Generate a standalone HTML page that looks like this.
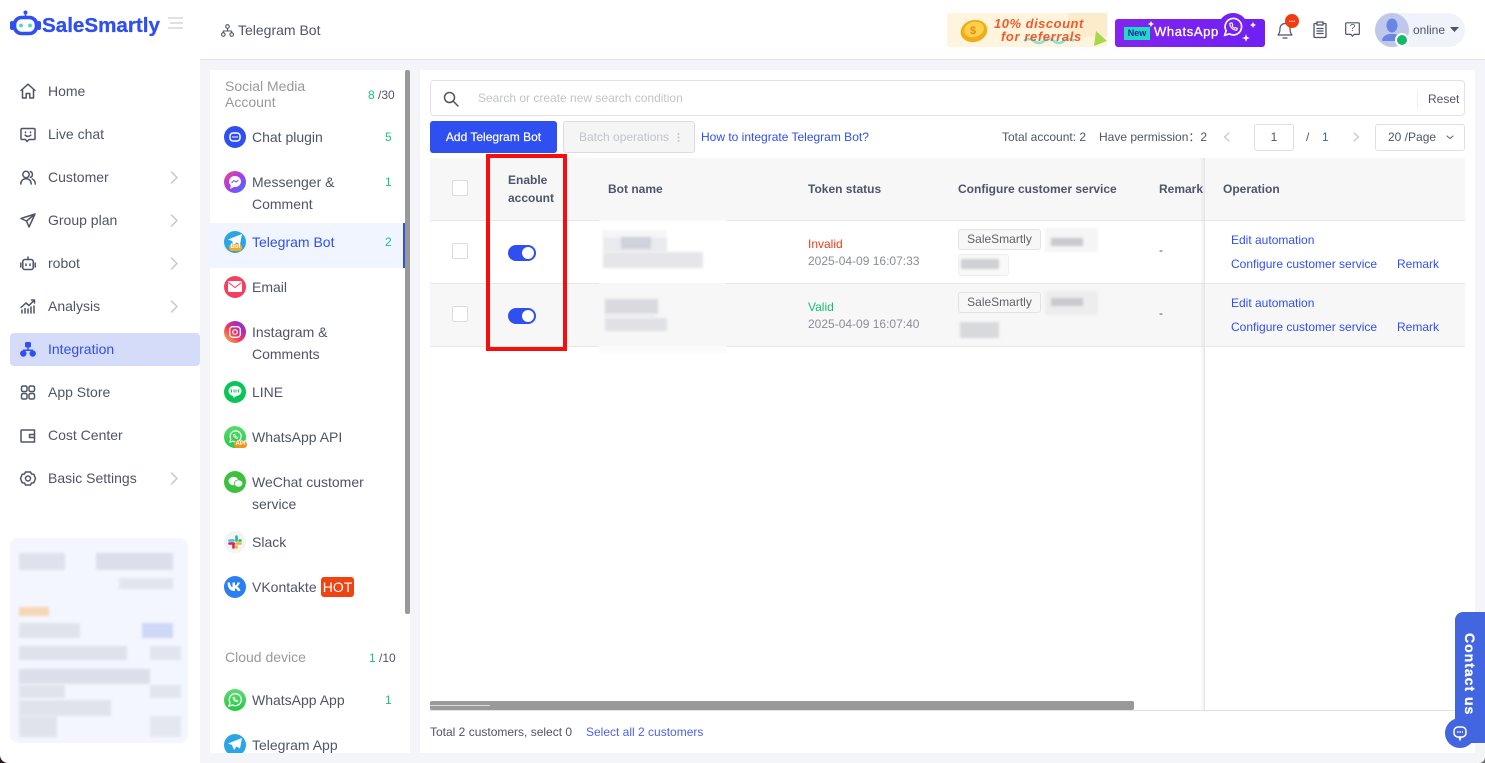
<!DOCTYPE html>
<html><head><meta charset="utf-8"><title>Telegram Bot</title>
<style>
*{box-sizing:border-box;margin:0;padding:0}
html,body{width:1485px;height:763px;overflow:hidden;background:#f4f5f8;font-family:"Liberation Sans",Arial,sans-serif}
body{position:relative}
.a{position:absolute}
.z{filter:blur(1.2px)}
.t{position:absolute;white-space:nowrap;line-height:20px;height:20px}
.m{font-size:14px;color:#4e5569;left:48px}
.l{font-size:14px;color:#4e5569;left:252px}
.s{font-size:12px;color:#4e5569}
.b{font-size:12px;color:#4e5569;font-weight:bold}
.k{font-size:12px;color:#2f4ff0}
.n{font-size:12px;color:#19c37d;left:385px}
.g{font-size:12px;color:#8a8d99}
svg{position:absolute;display:block;overflow:visible}
.ico{fill:none;stroke:#4e5569;stroke-width:1.5;stroke-linecap:round;stroke-linejoin:round}
.c{position:absolute;left:224px;width:22px;height:22px;border-radius:50%}
.cb{position:absolute;left:452px;width:16px;height:16px;border:1px solid #dcdcdc;border-radius:2px;background:#fff}
.sw{position:absolute;left:508px;width:28px;height:16px;border-radius:8px;background:#2f4ff0}
.sw i{position:absolute;right:2px;top:2px;width:12px;height:12px;border-radius:50%;background:#fff}
.tag{position:absolute;left:958px;width:83px;height:21px;border:1px solid #e3e3e3;background:#f7f7f7;border-radius:3px;font-size:12px;line-height:19px;color:#606266;text-align:center}
.bdg{position:absolute;background:#f7a823;border-radius:3px;color:#fff;font-size:6px;line-height:7px;height:7px;text-align:center;font-weight:bold}
</style></head><body>

<!-- sidebar -->
<div class="a" style="left:0;top:0;width:200px;height:763px;background:#fff"></div>
<svg style="left:10px;top:10px" width="31" height="27" viewBox="0 0 31 27">
<circle cx="15.5" cy="2.5" r="2" fill="#2f4ff0"/><path d="M15.5 3v4" stroke="#2f4ff0" stroke-width="1.5"/>
<rect x="4.5" y="7.500" width="22" height="16" rx="7" fill="none" stroke="#2f4ff0" stroke-width="3.600"/>
<rect x="0" y="11" width="4" height="9" rx="2" fill="#2f4ff0"/><rect x="27" y="11" width="4" height="9" rx="2" fill="#2f4ff0"/>
<circle cx="11" cy="15.500" r="1.900" fill="#4fd6c4"/><circle cx="20" cy="15.500" r="1.900" fill="#4fd6c4"/></svg>
<div class="t" style="left:42px;top:14px;height:24px;line-height:24px;font-size:20.6px;font-weight:bold;color:#2f4ff0;-webkit-text-stroke:.3px #2f4ff0">SaleSmartly</div>
<svg style="left:167px;top:17px" width="17" height="12"><path d="M1 1h15M3 6h13M1 11h15" stroke="#d4d6dc" stroke-width="1.5"/></svg>

<svg class="ico" style="left:20px;top:83px" width="16" height="16" viewBox="0 0 16 16"><path d="M1 7.500 8 1.200l7 6.300M2.500 6.500V15h3.700v-4.500h3.600V15h3.700V6.500"/></svg>
<svg class="ico" style="left:20px;top:127px" width="16" height="16" viewBox="0 0 16 16"><path d="M2 1.500h12a1 1 0 0 1 1 1v9a1 1 0 0 1-1 1H9l-2 2-1.500-2H2a1 1 0 0 1-1-1v-9a1 1 0 0 1 1-1zM5.200 8.200c1.500 1.500 4 1.500 5.600 0M5.500 5v.6M10.500 5v.6"/></svg>
<svg class="ico" style="left:20px;top:170px" width="16" height="15" viewBox="0 0 16 15"><circle cx="6" cy="4.500" r="3.200"/><path d="M.8 14c0-3.200 2.200-5.300 5.200-5.300s5.200 2.100 5.200 5.300M10.300 1.500a3.200 3.200 0 0 1 0 6M12.300 9c1.700.8 3 2.600 3 5"/></svg>
<svg class="ico" style="left:20px;top:213px" width="16" height="15" viewBox="0 0 16 15"><path d="M15 1 1 5.500l5.500 2.500 2.500 6zM6.500 8 15 1"/></svg>
<svg class="ico" style="left:20px;top:256px" width="16" height="15" viewBox="0 0 16 15"><rect x="2.800" y="3.500" width="10.400" height="10" rx="2"/><path d="M8 3.500V1M.8 7v4M15.200 7v4M6 8v1.500M10 8v1.500"/></svg>
<svg class="ico" style="left:20px;top:299px" width="16" height="15" viewBox="0 0 16 15"><path d="M1 8.500 6 4l3 2.500L14.500 1M11.500 1h3v3M2 11v3M5 9.500V14M8 10v4M11 8v6M14 7v7"/></svg>
<svg class="ico" style="left:20px;top:385px" width="16" height="15" viewBox="0 0 16 15"><rect x="1.500" y="1" width="5.500" height="5.500" rx="1.500"/><rect x="9" y="1" width="5.500" height="5.500" rx="1.500"/><rect x="1.500" y="8.500" width="5.500" height="5.500" rx="1.500"/><rect x="9" y="8.500" width="5.500" height="5.500" rx="1.500"/></svg>
<svg class="ico" style="left:20px;top:428px" width="16" height="15" viewBox="0 0 16 15"><path d="M14.500 2H2a1 1 0 0 0-1 1v10a1 1 0 0 0 1 1h12.500zM9.500 6.500h5M9.500 9.500h5M9.500 6.500v3"/></svg>
<svg class="ico" style="left:20px;top:471px" width="16" height="15" viewBox="0 0 16 15"><path d="M5.500 1h5L11.500 3l2.300.2 1.700 4.300-1.700 4.300-2.300.2L10.500 14h-5l-1-2-2.300-.2L.5 7.500l1.700-4.300L4.500 3z"/><circle cx="8" cy="7.500" r="2.500"/></svg>

<svg class="ico" style="left:170px;top:171px;stroke:#c6c8d0" width="9" height="13"><path d="M1.500 1 7 6.500 1.500 12"/></svg>
<svg class="ico" style="left:170px;top:214px;stroke:#c6c8d0" width="9" height="13"><path d="M1.500 1 7 6.500 1.500 12"/></svg>
<svg class="ico" style="left:170px;top:257px;stroke:#c6c8d0" width="9" height="13"><path d="M1.500 1 7 6.500 1.500 12"/></svg>
<svg class="ico" style="left:170px;top:300px;stroke:#c6c8d0" width="9" height="13"><path d="M1.500 1 7 6.500 1.500 12"/></svg>
<svg class="ico" style="left:170px;top:472px;stroke:#c6c8d0" width="9" height="13"><path d="M1.500 1 7 6.500 1.500 12"/></svg>

<div class="a" style="left:10px;top:333px;width:190px;height:33px;background:#d5dcf9;border-radius:4px"></div>
<div class="t m" style="top:81px">Home</div>
<div class="t m" style="top:124px">Live chat</div>
<div class="t m" style="top:167px">Customer</div>
<div class="t m" style="top:210px">Group plan</div>
<div class="t m" style="top:253px">robot</div>
<div class="t m" style="top:296px">Analysis</div>
<div class="t m" style="top:339px;color:#2f4ff0">Integration</div>
<div class="t m" style="top:382px">App Store</div>
<div class="t m" style="top:425px">Cost Center</div>
<div class="t m" style="top:468px">Basic Settings</div>
<svg style="left:20px;top:342px" width="16" height="15" viewBox="0 0 16 15" fill="#2f4ff0"><rect x="5" y="0" width="6" height="5.500" rx="1.500"/><circle cx="3.300" cy="11.500" r="3.200"/><circle cx="12.700" cy="11.500" r="3.200"/><path d="M7.300 5h1.400v2.500H13v2h-1.500V9H4.500v.5H3v-2h4.300z"/></svg>

<!-- blurred card -->
<div class="a" style="left:10px;top:538px;width:178px;height:205px;background:#f3f6fe;border-radius:8px"></div>
<div class="a z" style="left:19px;top:553px;width:46px;height:17px;background:#dfe2ec"></div>
<div class="a z" style="left:96px;top:553px;width:77px;height:17px;background:#dcdfea"></div>
<div class="a z" style="left:119px;top:578px;width:54px;height:11px;background:#e2e5ee"></div>
<div class="a z" style="left:19px;top:607px;width:30px;height:9px;background:#f6d7b5"></div>
<div class="a z" style="left:19px;top:623px;width:61px;height:15px;background:#e0e3ec"></div>
<div class="a z" style="left:142px;top:623px;width:31px;height:15px;background:#cfd8f8"></div>
<div class="a z" style="left:19px;top:646px;width:108px;height:14px;background:#dfe2eb"></div>
<div class="a z" style="left:150px;top:646px;width:31px;height:14px;background:#e2e5ee"></div>
<div class="a z" style="left:19px;top:669px;width:131px;height:15px;background:#dcdfe9"></div>
<div class="a z" style="left:19px;top:685px;width:46px;height:13px;background:#e0e3ec"></div>
<div class="a z" style="left:150px;top:685px;width:31px;height:13px;background:#e2e5ee"></div>
<div class="a z" style="left:19px;top:700px;width:92px;height:16px;background:#e0e3ec"></div>
<div class="a z" style="left:19px;top:716px;width:38px;height:21px;background:#e0e3ec"></div>
<div class="a z" style="left:150px;top:716px;width:31px;height:21px;background:#e4e7f0"></div>

<!-- header -->
<div class="a" style="left:200px;top:0;width:1285px;height:60px;background:#fff;border-bottom:1px solid #e2e2e2"></div>
<svg class="ico" style="left:221px;top:24px;stroke-width:1.100" width="13" height="13" viewBox="0 0 13 13"><circle cx="6.500" cy="2.500" r="1.800"/><circle cx="2.300" cy="10.500" r="1.800"/><circle cx="10.700" cy="10.500" r="1.800"/><path d="M6.500 4.500v2.500M2.300 8.700V7h8.400v1.700"/></svg>
<div class="t" style="left:238px;top:20px;font-size:14px;color:#4e5569">Telegram Bot</div>

<!-- referral banner -->
<div class="a" style="left:947px;top:13px;width:160px;height:34px;background:#fff4dd;border-radius:3px"></div>
<div class="a" style="left:1068px;top:13px;width:39px;height:24px;background:#fdeccb"></div>
<svg style="left:958px;top:18px" width="30" height="24"><ellipse cx="16" cy="13" rx="13.500" ry="11" fill="#f0ac1a" transform="rotate(-15 16 13)"/><ellipse cx="16" cy="11.500" rx="10" ry="7.500" fill="#fcd24a" transform="rotate(-15 16 11.500)"/><text x="12" y="16" font-size="11" font-weight="bold" fill="#e8871e" font-family="Liberation Sans">$</text></svg>
<svg style="left:1094px;top:31px" width="14" height="16"><path d="M2 0 13 10 0 15z" fill="#a5d94a"/></svg>
<svg style="left:1024px;top:38px" width="50" height="6"><path d="M0 3q5-4 10 0t10 0 10 0 10 0 10 0" fill="none" stroke="#7fe3de" stroke-width="2.500"/></svg>
<div class="t" style="left:994px;top:15px;font-size:13px;line-height:17px;height:17px;font-weight:bold;font-style:italic;color:#ef5b2b;letter-spacing:.5px">10% discount</div>
<div class="t" style="left:1001px;top:28px;font-size:13px;line-height:17px;height:17px;font-weight:bold;font-style:italic;color:#ef5b2b;letter-spacing:.6px">for referrals</div>

<!-- whatsapp banner -->
<div class="a" style="left:1115px;top:19px;width:150px;height:28px;background:linear-gradient(90deg,#8324ee,#6f20f5);border-radius:3px"></div>
<div class="a" style="left:1218px;top:13px;width:30px;height:20px;background:#7322f3;border-radius:15px 15px 0 0"></div>
<div class="a" style="left:1124px;top:27px;width:26px;height:13px;background:#1edcc4;font-size:9px;line-height:13px;font-weight:bold;color:#2a1aa0;text-align:center">New</div>
<div class="t" style="left:1154px;top:22px;font-size:13px;color:#fff;letter-spacing:.6px;-webkit-text-stroke:.3px #fff">WhatsApp</div>
<svg style="left:1222px;top:16px" width="22" height="22" viewBox="0 0 24 24" fill="none" stroke="#fff" stroke-width="1.800"><path d="M3 21l1.500-5A9 9 0 1 1 8 19.500z"/><path d="M8.500 8c0 4 3.500 7.500 7.500 7.500l.8-2-2.300-1-1 .8c-1-.5-2-1.500-2.500-2.500l.8-1-1-2.300z" stroke-width="1.200"/></svg>
<svg style="left:1115px;top:13px" width="150" height="34" fill="#fff"><path d="M138 9l1 2 2 1-2 1-1 2-1-2-2-1 2-1zM131 21l1 3 3 1-3 1-1 3-1-3-3-1 3-1zM36 8l1 2 2 1-2 1-1 2-1-2-2-1 2-1z"/></svg>

<!-- top icons -->
<svg class="ico" style="left:1277px;top:21px;stroke-width:1.200" width="16" height="18" viewBox="0 0 16 18"><path d="M1 14c1.500-1.500 2-3 2-6.500a5 5 0 0 1 10 0c0 3.500.5 5 2 6.500zM6 17h4"/></svg>
<div class="a" style="left:1285px;top:14px;width:14px;height:14px;border-radius:50%;background:#f23c10;color:#fff;font-size:8px;line-height:12px;text-align:center;font-weight:bold">...</div>
<svg class="ico" style="left:1313px;top:21px;stroke-width:1.300" width="14" height="17" viewBox="0 0 14 17"><rect x="1" y="2.500" width="12" height="14" rx="1"/><rect x="4" y="1" width="6" height="3" fill="#fff"/><path d="M4 7.500h6M4 10h6M4 12.500h6"/></svg>
<svg class="ico" style="left:1345px;top:22px;stroke-width:1.200" width="15" height="15" viewBox="0 0 15 15"><path d="M1.500.8h12a.8.800 0 0 1 .8.800v10a.8.800 0 0 1-.8.800H9l-1.500 1.800L6 12.400H1.500a.8.800 0 0 1-.8-.800v-10a.8.800 0 0 1 .8-.800z"/></svg>
<div class="t" style="left:1345px;top:19px;width:15px;text-align:center;font-size:10px;color:#4e5569">?</div>

<div class="a" style="left:1375px;top:13px;width:90px;height:34px;background:#f0f3fa;border-radius:17px"></div>
<div class="a" style="left:1375px;top:13px;width:34px;height:34px;background:#bfc8ea;border-radius:50%"></div>
<svg style="left:1381px;top:18px" width="22" height="24" viewBox="0 0 22 24" fill="#6a85e8"><ellipse cx="11" cy="7.500" rx="5.500" ry="7"/><path d="M1 23c0-4 3-6 7-7h6c4 1 7 3 7 7z"/></svg>
<div class="a" style="left:1395px;top:33px;width:14px;height:14px;border-radius:50%;background:#16b96a;border:2px solid #fff"></div>
<div class="t" style="left:1413px;top:20px;font-size:12px;color:#4e5569">online</div>
<svg style="left:1450px;top:27px" width="9" height="6"><path d="M0 0h9L4.500 5z" fill="#4e5569"/></svg>

<!-- list panel -->
<div class="a" style="left:210px;top:70px;width:200px;height:683px;background:#fff"></div>
<div class="a" style="left:405px;top:70px;width:5px;height:544px;background:#999;border-radius:2px"></div>
<div class="a" style="left:210px;top:223px;width:195px;height:45px;background:#f0f5ff"></div>
<div class="a" style="left:403px;top:223px;width:2px;height:45px;background:#2f4ff0"></div>

<div class="a" style="left:225px;top:78px;font-size:14px;line-height:16px;color:#999">Social Media<br>Account</div>
<div class="t" style="left:368px;top:85px;font-size:12px;color:#4e5569"><span style="color:#19c37d">8</span> /30</div>

<div class="c" style="top:126px;background:#2f4ff0"></div>
<svg style="left:229px;top:132px" width="12" height="11"><rect x="1" y="1" width="10" height="8" rx="3" fill="none" stroke="#fff" stroke-width="1.500"/><path d="M3 5h6" stroke="#fff"/></svg>
<div class="t l" style="top:127px">Chat plugin</div><div class="t n" style="top:127px">5</div>

<div class="c" style="top:171px;background:linear-gradient(135deg,#f04a7a,#a43cf0 50%,#2f7cf8)"></div>
<svg style="left:228px;top:175px" width="14" height="14"><ellipse cx="7" cy="6.500" rx="6" ry="5.500" fill="#fff"/><path d="M2 14l1-4 3 2z" fill="#fff"/><path d="M3.500 8 6 5.500l2 1.500 2.500-2" fill="none" stroke="#7a4cf0"/></svg>
<div class="a" style="left:252px;top:171px;font-size:14px;line-height:22px;color:#4e5569">Messenger &amp;<br>Comment</div><div class="t n" style="top:172px">1</div>

<div class="c" style="top:231px;background:#2aa5e6"></div>
<svg style="left:228px;top:234px" width="14" height="12"><path d="M14 0 0 5.500l4 1.500L6 12l2.500-3.500 3.500 2z" fill="#fff"/></svg>
<div class="bdg" style="left:229px;top:244px;width:13px">Bot</div>
<div class="t l" style="top:232px;color:#2f4ff0">Telegram Bot</div><div class="t n" style="top:232px">2</div>

<div class="c" style="top:276px;background:#f43f5e"></div>
<svg style="left:228px;top:281px" width="14" height="11"><rect width="14" height="11" rx="1.500" fill="#fff"/><path d="M.5 1.500 7 6.500l6.500-5" fill="none" stroke="#f43f5e"/></svg>
<div class="t l" style="top:277px">Email</div>

<div class="c" style="top:321px;background:linear-gradient(45deg,#fdc13f,#f0365e 45%,#a32ec0 75%,#5a50d8)"></div>
<svg style="left:229px;top:326px" width="12" height="12"><rect x=".7" y=".7" width="10.600" height="10.600" rx="3" fill="none" stroke="#fff" stroke-width="1.300"/><circle cx="6" cy="6" r="2.300" fill="none" stroke="#fff" stroke-width="1.200"/></svg>
<div class="a" style="left:252px;top:321px;font-size:14px;line-height:22px;color:#4e5569">Instagram &amp;<br>Comments</div>

<div class="c" style="top:381px;background:#06c755"></div>
<svg style="left:228px;top:385px" width="14" height="13"><ellipse cx="7" cy="6" rx="6.500" ry="5.300" fill="#fff"/><path d="M5 11h3l-2 2z" fill="#fff"/><path d="M3.500 4.500v3M6 4.500v3M8 4.500v3M10.500 4.500v3" stroke="#06c755"/></svg>
<div class="t l" style="top:382px">LINE</div>

<div class="c" style="top:426px;background:linear-gradient(#5bdc6e,#26c945)"></div>
<svg style="left:229px;top:430px" width="13" height="13" fill="none" stroke="#fff" stroke-width="1.200"><path d="M1 12l.8-3A5.500 5.500 0 1 1 4 11.200z"/><path d="M4.500 4.500c0 2 1.800 4 4 4l.4-1.200-1.200-.5-.5.400c-.5-.3-1-.8-1.300-1.300l.4-.5-.5-1.200z" stroke-width=".7"/></svg>
<div class="bdg" style="left:234px;top:441px;width:13px;background:#f7931e">API</div>
<div class="t l" style="top:427px">WhatsApp API</div>

<div class="c" style="top:471px;background:#3dc13c"></div>
<svg style="left:228px;top:476px" width="15" height="12" fill="#fff"><ellipse cx="5.500" cy="5" rx="5" ry="4.300"/><ellipse cx="10.500" cy="7.500" rx="4.300" ry="3.600" stroke="#3dc13c" stroke-width=".8"/></svg>
<div class="a" style="left:252px;top:471px;font-size:14px;line-height:22px;color:#4e5569">WeChat customer<br>service</div>

<div class="c" style="top:531px;background:#f3f3f3"></div>
<svg style="left:228px;top:535px" width="14" height="14" stroke-width="2.600" stroke-linecap="round" fill="none"><path d="M8.500 1.500v4" stroke="#2eb67d"/><path d="M1.500 8.500h4" stroke="#e01e5a"/><path d="M8.500 8.500h4" stroke="#ecb22e"/><path d="M5.500 8.500v4" stroke="#e01e5a"/><path d="M1.500 5.500h4" stroke="#36c5f0"/><path d="M8.500 12.500v-1" stroke="#ecb22e"/><path d="M12.500 5.500h-1" stroke="#2eb67d"/></svg>
<div class="t l" style="top:532px">Slack</div>

<div class="c" style="top:576px;background:#2a80f0"></div>
<svg style="left:227px;top:581px" width="16" height="12" viewBox="0 0 16 12" fill="#fff"><path d="M.5 1.500h2.500c.2 3.200 1.500 4.500 2.500 4.800V1.500H8v3c1-.2 2-1.200 2.500-3h2.400c-.4 2-1.700 3.400-2.700 4.100 1.100.6 2.600 1.800 3.300 4.400h-2.700c-.5-1.600-1.600-2.700-2.800-2.800V10H7.300C3 10 .7 7 .5 1.500z"/></svg>
<div class="t l" style="top:577px">VKontakte</div>
<div class="a" style="left:321px;top:577px;width:33px;height:20px;background:#f04313;border-radius:3px;font-size:14px;line-height:20px;color:#fff;text-align:center">HOT</div>

<div class="t" style="left:225px;top:647px;font-size:14px;color:#999">Cloud device</div>
<div class="t" style="left:369px;top:648px;font-size:12px;color:#4e5569"><span style="color:#19c37d">1</span> /10</div>

<div class="c" style="top:689px;background:linear-gradient(#5bdc6e,#26c945)"></div>
<svg style="left:228px;top:693px" width="14" height="14" fill="none" stroke="#fff" stroke-width="1.300"><path d="M1 13l1-3.500A6 6 0 1 1 4.500 12z"/><path d="M5 4.500c0 2.500 2 4.500 4.500 4.500l.5-1.300-1.400-.6-.6.500c-.6-.3-1.200-.9-1.500-1.500l.5-.6-.6-1.400z" stroke-width=".8"/></svg>
<div class="t l" style="top:690px">WhatsApp App</div><div class="t n" style="top:690px">1</div>

<div class="a" style="left:210px;top:734px;width:195px;height:19px;overflow:hidden">
<div class="c" style="left:14px;top:0;background:#2aa5e6"></div>
<svg style="left:18px;top:4px" width="14" height="12"><path d="M14 0 0 5.500l4 1.500L6 12l2.500-3.500 3.500 2z" fill="#fff"/></svg>
<div class="t l" style="left:42px;top:1px">Telegram App</div></div>

<!-- main -->
<div class="a" style="left:420px;top:70px;width:1055px;height:683px;background:#fff"></div>
<div class="a" style="left:430px;top:80px;width:1035px;height:36px;border:1px solid #e2e2e2;border-radius:4px"></div>
<svg style="left:443px;top:91px" width="16" height="16" fill="none" stroke="#555" stroke-width="1.500"><circle cx="6.500" cy="6.500" r="5"/><path d="M10.500 10.500 15 15" stroke-linecap="round"/></svg>
<div class="t" style="left:478px;top:88px;font-size:12px;color:#c0c4cc">Search or create new search condition</div>
<div class="a" style="left:1417px;top:90px;width:1px;height:17px;background:#eee"></div>
<div class="t s" style="left:1428px;top:89px">Reset</div>

<div class="a" style="left:430px;top:121px;width:127px;height:32px;background:#2f4ff0;border-radius:3px;color:#fff;font-size:12px;line-height:32px;text-align:center;-webkit-text-stroke:.2px #fff">Add Telegram Bot</div>
<div class="a" style="left:563px;top:121px;width:132px;height:32px;background:#f5f5f5;border:1px solid #dcdcdc;border-radius:3px"></div>
<div class="t" style="left:579px;top:127px;font-size:12px;color:#c0c4cc">Batch operations</div>
<svg style="left:677px;top:133px" width="3" height="9" fill="#c0c4cc"><circle cx="1.500" cy="1" r="1"/><circle cx="1.500" cy="4.500" r="1"/><circle cx="1.500" cy="8" r="1"/></svg>
<div class="t k" style="left:701px;top:127px">How to integrate Telegram Bot?</div>
<div class="t s" style="left:1002px;top:127px">Total account: 2</div>
<div class="t s" style="left:1099px;top:127px">Have permission：2</div>
<svg class="ico" style="left:1223px;top:132px;stroke:#c5c7cf;stroke-width:1.200" width="8" height="10"><path d="M6 1 1.500 5 6 9"/></svg>
<div class="a" style="left:1254px;top:124px;width:40px;height:27px;border:1px solid #dcdfe6;border-radius:3px;font-size:12px;line-height:25px;text-align:center;color:#4e5569">1</div>
<div class="t s" style="left:1306px;top:127px">/</div>
<div class="t" style="left:1322px;top:127px;font-size:12px;color:#2f6fb0">1</div>
<svg class="ico" style="left:1352px;top:132px;stroke:#c5c7cf;stroke-width:1.200" width="8" height="10"><path d="M2 1 6.500 5 2 9"/></svg>
<div class="a" style="left:1375px;top:124px;width:90px;height:27px;border:1px solid #dcdfe6;border-radius:3px"></div>
<div class="t s" style="left:1388px;top:127px">20 /Page</div>
<svg class="ico" style="left:1446px;top:135px;stroke-width:1.100;stroke:#666" width="8" height="5"><path d="M1 1l3 2.500L7 1"/></svg>

<!-- table -->
<div class="a" style="left:430px;top:158px;width:1035px;height:62px;background:#f7f7f7"></div>
<div class="a" style="left:430px;top:284px;width:1035px;height:62px;background:#f7f7f7"></div>
<div class="a" style="left:430px;top:220px;width:1035px;height:1px;background:#e8e8e8"></div>
<div class="a" style="left:430px;top:283px;width:1035px;height:1px;background:#e8e8e8"></div>
<div class="a" style="left:430px;top:346px;width:1035px;height:1px;background:#e8e8e8"></div>
<div class="a" style="left:1200px;top:158px;width:4px;height:552px;background:linear-gradient(90deg,rgba(0,0,0,0),rgba(0,0,0,.05))"></div>
<div class="a" style="left:1204px;top:158px;width:1px;height:552px;background:#e6e6e6"></div>
<div class="a" style="left:430px;top:710px;width:1035px;height:1px;background:#e2e2e2"></div>
<div class="a" style="left:430px;top:701px;width:704px;height:9px;background:#999;border-radius:2px"></div>
<div class="a" style="left:430px;top:705px;width:60px;height:1px;background:#ddd"></div>

<div class="cb" style="top:180px"></div><div class="cb" style="top:243px"></div><div class="cb" style="top:306px"></div>
<div class="a b" style="left:508px;top:171px;line-height:18px">Enable<br>account</div>
<div class="t b" style="left:608px;top:179px">Bot name</div>
<div class="t b" style="left:808px;top:179px">Token status</div>
<div class="t b" style="left:958px;top:179px">Configure customer service</div>
<div class="t b" style="left:1159px;top:179px">Remark</div>
<div class="t b" style="left:1223px;top:179px">Operation</div>

<div class="sw" style="top:245px"><i></i></div><div class="sw" style="top:308px"><i></i></div>

<!-- blurred names -->
<div class="a" style="left:599px;top:220px;width:127px;height:1px;background:#f9f9f9"></div>
<div class="a" style="left:599px;top:283px;width:127px;height:1px;background:#f5f5f5"></div>
<div class="a" style="left:599px;top:346px;width:127px;height:7px;background:#fbfbfb"></div>
<div class="a z" style="left:602px;top:230px;width:64px;height:7px;background:#f5f6f6"></div>
<div class="a z" style="left:603px;top:237px;width:64px;height:15px;background:#e9ebee"></div>
<div class="a z" style="left:621px;top:237px;width:30px;height:12px;background:#cfd2da"></div>
<div class="a z" style="left:603px;top:252px;width:100px;height:16px;background:#e5e6ea"></div>
<div class="a z" style="left:605px;top:299px;width:53px;height:15px;background:#d9dadf"></div>
<div class="a z" style="left:605px;top:318px;width:62px;height:13px;background:#e0e1e5"></div>
<div class="a z" style="left:605px;top:314px;width:50px;height:4px;background:#ebebee"></div>

<div class="t" style="left:808px;top:234px;font-size:12px;color:#f03a17">Invalid</div>
<div class="t g" style="left:808px;top:251px">2025-04-09 16:07:33</div>
<div class="t" style="left:808px;top:297px;font-size:12px;color:#19be6b">Valid</div>
<div class="t g" style="left:808px;top:314px">2025-04-09 16:07:40</div>

<div class="tag" style="top:229px">SaleSmartly</div>
<div class="a z" style="left:1045px;top:228px;width:53px;height:24px;background:#f5f5f6"></div>
<div class="a z" style="left:1051px;top:238px;width:32px;height:8px;background:#c9cacd"></div>
<div class="a" style="left:958px;top:254px;width:51px;height:22px;background:#f9f9f9;border:1px solid #eee;border-radius:3px"></div>
<div class="a z" style="left:961px;top:259px;width:38px;height:10px;background:#cfd0d3"></div>
<div class="tag" style="top:292px">SaleSmartly</div>
<div class="a z" style="left:1045px;top:291px;width:53px;height:24px;background:#ededee"></div>
<div class="a z" style="left:1051px;top:298px;width:32px;height:8px;background:#c9cacd"></div>
<div class="a z" style="left:960px;top:322px;width:39px;height:16px;background:#d8d9dc"></div>

<div class="t s" style="left:1159px;top:240px">-</div>
<div class="t s" style="left:1159px;top:303px">-</div>
<div class="t k" style="left:1231px;top:230px">Edit automation</div>
<div class="t k" style="left:1231px;top:254px">Configure customer service</div>
<div class="t k" style="left:1397px;top:254px">Remark</div>
<div class="t k" style="left:1231px;top:293px">Edit automation</div>
<div class="t k" style="left:1231px;top:317px">Configure customer service</div>
<div class="t k" style="left:1397px;top:317px">Remark</div>

<!-- red highlight -->
<div class="a" style="left:486px;top:154px;width:81px;height:197px;border:4px solid #f80d0d"></div>

<div class="t s" style="left:430px;top:722px">Total 2 customers, select 0</div>
<div class="t" style="left:586px;top:722px;font-size:12px;color:#4d5ff0">Select all 2 customers</div>

<!-- contact -->
<div class="a" style="left:1455px;top:612px;width:30px;height:131px;background:#4166e0;border-radius:8px 0 0 0"></div>
<div class="t" style="left:1470px;top:633px;height:16px;line-height:16px;font-size:14px;font-weight:bold;color:#fff;transform-origin:0 0;transform:rotate(90deg) translateY(-8px);letter-spacing:1px;-webkit-text-stroke:.3px #fff">Contact us</div>
<div class="a" style="left:1445px;top:718px;width:30px;height:30px;border-radius:50%;background:#4166e0"></div>
<svg style="left:1453px;top:726px" width="14" height="14" fill="none" stroke="#fff" stroke-width="1.500"><rect x="1" y="1" width="12" height="10" rx="4"/><path d="M4 6h6" stroke-dasharray="1.500 1"/><path d="M6 11l1 2.500 1-2.500"/></svg>

<!-- window corners -->
<div class="a" style="left:0;top:755px;width:8px;height:8px;background:#2b1a20"></div>
<div class="a" style="left:0;top:747px;width:16px;height:16px;border-radius:50%;background:#fff"></div>
<div class="a" style="left:1479px;top:757px;width:6px;height:6px;background:#6f6b6c"></div>
<div class="a" style="left:1473px;top:751px;width:12px;height:12px;border-radius:50%;background:#f4f5f8"></div>
</body></html>
